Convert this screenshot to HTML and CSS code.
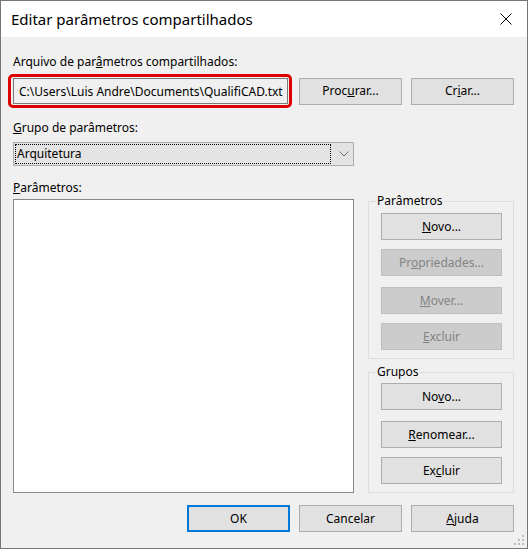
FILE: index.html
```html
<!DOCTYPE html>
<html lang="pt-BR">
<head>
  <meta charset="UTF-8" />
  <title>Editar parâmetros compartilhados</title>
  <link rel="stylesheet" href="styles.css">
</head>
<body>
  <div class="window">
    <div class="titlebar">
      <span class="title">Editar parâmetros compartilhados</span>
      <svg class="close" width="12" height="12" viewBox="0 0 12 12">
        <path d="M0.5 0.5 L11.5 11.5 M11.5 0.5 L0.5 11.5" stroke="#000" stroke-width="1" fill="none" />
      </svg>
    </div>

    <div class="dialog">
      <label class="field-label first-label">Arquivo de par<u>â</u>metros compartilhados:</label>
      <div class="file-row">
        <div class="highlight">
          <input class="textbox" type="text" readonly value="C:\Users\Luis Andre\Documents\QualifiCAD.txt">
        </div>
        <button class="btn btn-browse">Proc<u>u</u>rar...</button>
        <button class="btn btn-create">Cr<u>i</u>ar...</button>
      </div>

      <label class="field-label group-label"><u>G</u>rupo de parâmetros:</label>
      <div class="combo">
        <span class="combo-value">Arquitetura</span>
        <svg class="chevron" width="10" height="6" viewBox="0 0 10 6">
          <path d="M0.5 0.5 L5 5 L9.5 0.5" stroke="#6d6d6d" stroke-width="1" fill="none" />
        </svg>
      </div>

      <div class="main">
        <div class="list-col">
          <label class="field-label"><u>P</u>arâmetros:</label>
          <div class="listbox"></div>
        </div>

        <div class="side-col">
          <fieldset class="group group-params">
            <legend>Parâmetros</legend>
            <div class="group-buttons">
              <button class="btn"><u>N</u>ovo...</button>
              <button class="btn" disabled>Pr<u>o</u>priedades...</button>
              <button class="btn gap-wide" disabled><u>M</u>over...</button>
              <button class="btn" disabled><u>E</u>xcluir</button>
            </div>
          </fieldset>

          <fieldset class="group group-groups">
            <legend>Grupos</legend>
            <div class="group-buttons">
              <button class="btn">No<u>v</u>o...</button>
              <button class="btn gap-wide"><u>R</u>enomear...</button>
              <button class="btn">Ex<u>c</u>luir</button>
            </div>
          </fieldset>
        </div>
      </div>

      <div class="footer">
        <button class="btn btn-default">OK</button>
        <button class="btn">Cancelar</button>
        <button class="btn"><u>A</u>juda</button>
      </div>
    </div>

    <!-- size grip -->
    <svg class="grip" width="10" height="10" viewBox="0 0 10 10">
      <rect x="8" y="0" width="2" height="2" fill="#bcbcbc" />
      <rect x="4" y="4" width="2" height="2" fill="#bcbcbc" />
      <rect x="8" y="4" width="2" height="2" fill="#bcbcbc" />
      <rect x="0" y="8" width="2" height="2" fill="#bcbcbc" />
      <rect x="4" y="8" width="2" height="2" fill="#bcbcbc" />
      <rect x="8" y="8" width="2" height="2" fill="#bcbcbc" />
    </svg>
  </div>
</body>
</html>
```

FILE: styles.css
```css
html, body {
  margin: 0;
  padding: 0;
}

*, *::before, *::after {
  box-sizing: border-box;
}

body {
  font-family: "Noto Sans", "DejaVu Sans", sans-serif;
  font-size: 12px;
  color: #000;
  background: #fff;
}

.window {
  position: relative;
  width: 528px;
  height: 549px;
  border: 1px solid #767676;
  display: flex;
  flex-direction: column;
  background: #f0f0f0;
}

.titlebar {
  height: 36px;
  background: #fff;
  display: flex;
  align-items: center;
  justify-content: space-between;
  padding: 0 15px 0 10px;
}

.title {
  font-size: 15px;
  line-height: 20px;
}

.close {
  display: block;
}

.dialog {
  flex: 1;
  display: flex;
  flex-direction: column;
  padding: 17px 13px 0 12px;
}

.field-label {
  display: block;
  line-height: 16px;
  height: 16px;
  white-space: nowrap;
}

.file-row {
  display: flex;
  align-items: center;
  margin-top: 4px;
}

.highlight {
  display: flex;
  margin-left: -5px;
  padding: 1px 1px 1px 2px;
  border: 3px solid #dc0000;
  border-radius: 5px;
}

.textbox {
  width: 275px;
  height: 26px;
  margin: 0;
  padding: 0 0 0 5px;
  border: 1px solid #7a7a7a;
  background: #f0f0f0;
  font-family: inherit;
  font-size: 12px;
  color: #000;
  outline: none;
}

.btn {
  display: block;
  width: 103px;
  height: 27px;
  margin: 0;
  padding: 0;
  border: 1px solid #adadad;
  background: #e1e1e1;
  font-family: inherit;
  font-size: 12px;
  line-height: 16px;
  color: #000;
}

.btn:disabled {
  background: #cccccc;
  border-color: #bfbfbf;
  color: #838383;
}

.btn-default {
  border: 2px solid #0078d7;
}

.btn-browse {
  margin-left: 7px;
}

.btn-create {
  margin-left: 9px;
}

.group-label {
  margin-top: 12px;
}

.combo {
  display: flex;
  align-items: center;
  width: 341px;
  height: 24px;
  margin-top: 6px;
  border: 1px solid #adadad;
  background: #e3e3e3;
}

.combo-value {
  flex: 1;
  height: 20px;
  margin: 1px 8px 1px 1px;
  padding-left: 1px;
  border: 1px dotted #000;
  line-height: 18px;
}

.chevron {
  display: block;
  margin-right: 4px;
}

.main {
  display: flex;
  gap: 14px;
  margin-top: 14px;
}

.list-col {
  width: 341px;
}

.listbox {
  height: 294px;
  margin-top: 3px;
  border: 1px solid #828790;
  background: #fff;
}

.side-col {
  width: 146px;
}

.group {
  margin: 0;
  min-width: 0;
  padding: 4px 11px 8px 7px;
  border: 1px solid #dcdcdc;
}

.group legend {
  padding: 0 1px;
  line-height: 16px;
}

.group-params {
  margin-top: 13px;
}

.group-groups {
  margin-top: 5px;
  padding-top: 3px;
}

.group-buttons {
  display: flex;
  flex-direction: column;
  gap: 9px;
  padding-left: 5px;
}

.group-buttons .btn {
  width: 121px;
}

.group-buttons .gap-wide {
  margin-top: 2px;
}

.footer {
  display: flex;
  justify-content: flex-end;
  gap: 9px;
  margin-top: 12px;
}

.grip {
  position: absolute;
  right: 3px;
  bottom: 3px;
}
```
